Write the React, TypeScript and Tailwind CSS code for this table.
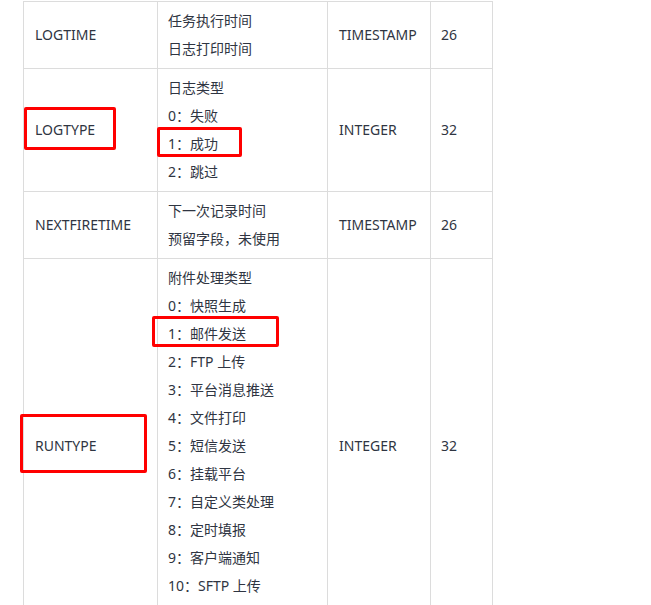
const rows = [
  { name: "LOGTIME", desc: ["任务执行时间", "日志打印时间"], type: "TIMESTAMP", len: "26" },
  { name: "LOGTYPE", desc: ["日志类型", "0：失败", "1：成功", "2：跳过"], type: "INTEGER", len: "32" },
  { name: "NEXTFIRETIME", desc: ["下一次记录时间", "预留字段，未使用"], type: "TIMESTAMP", len: "26" },
  {
    name: "RUNTYPE",
    desc: [
      "附件处理类型",
      "0：快照生成",
      "1：邮件发送",
      "2：FTP 上传",
      "3：平台消息推送",
      "4：文件打印",
      "5：短信发送",
      "6：挂载平台",
      "7：自定义类处理",
      "8：定时填报",
      "9：客户端通知",
      "10：SFTP 上传",
    ],
    type: "INTEGER",
    len: "32",
    // the list goes on below the visible area
    more: true,
  },
]

export default function App() {
  return (
    <div
      className="relative w-[651px] h-[605px] overflow-hidden bg-white text-[14px] text-[#2f3542]"
      style={{ fontFamily: '"Segoe UI", "Noto Sans", "Noto Sans CJK SC", sans-serif' }}
    >
      <table className="ml-[23px] mt-px border-collapse table-fixed w-[470px]">
        <colgroup>
          <col className="w-[134px]" />
          <col className="w-[170px]" />
          <col className="w-[103px]" />
          <col className="w-[62px]" />
        </colgroup>
        <tbody>
          {rows.map((r) => (
            <tr key={r.name}>
              <td className="border border-[#dcdcdc] px-[11px] py-[5px] align-middle leading-[28px]">{r.name}</td>
              <td className="border border-[#dcdcdc] px-[10px] py-[5px] align-middle leading-[28px]">
                {r.desc.map((d) => (
                  <div key={d}>{d}</div>
                ))}
                {r.more && <div className="h-[28px]" />}
              </td>
              <td className="border border-[#dcdcdc] px-[11px] py-[5px] align-middle leading-[28px]">{r.type}</td>
              <td className="border border-[#dcdcdc] px-[10px] py-[5px] align-middle leading-[28px]">{r.len}</td>
            </tr>
          ))}
        </tbody>
      </table>

      {/* red annotation boxes */}
      <div className="absolute left-[24px] top-[107px] w-[92px] h-[43px] border-[3px] border-[#f00] rounded-[2px]" />
      <div className="absolute left-[157px] top-[127px] w-[85px] h-[30px] border-[3px] border-[#f00] rounded-[2px]" />
      <div className="absolute left-[152px] top-[316px] w-[127px] h-[31px] border-[3px] border-[#f00] rounded-[2px]" />
      <div className="absolute left-[20px] top-[414px] w-[127px] h-[59px] border-[3px] border-[#f00] rounded-[2px]" />
    </div>
  )
}
